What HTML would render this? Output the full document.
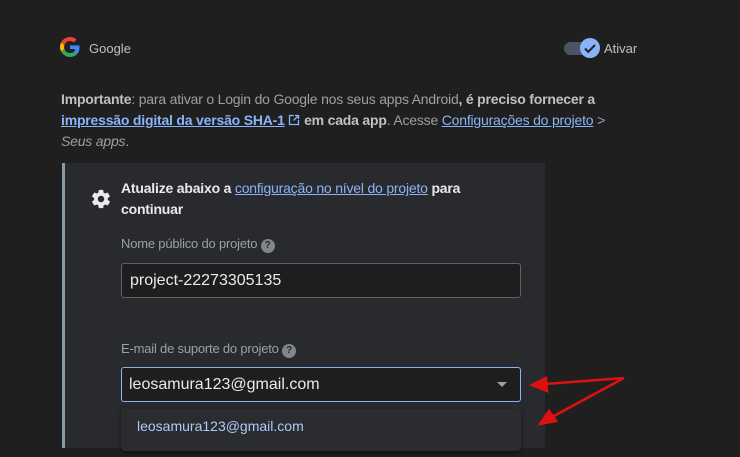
<!DOCTYPE html>
<html><head><meta charset="utf-8"><style>
*{box-sizing:border-box;margin:0;padding:0}
body{width:740px;height:457px;background:#1f1f1f;font-family:"Liberation Sans",Arial,sans-serif;color:#bdc1c6;position:relative;overflow:hidden;font-size:14px}
a{color:#8ab4f8;text-decoration:underline}
.abs{position:absolute}
b{color:#e8eaed}
</style></head><body>
<svg class="abs" style="left:60px;top:37px" width="20" height="20" viewBox="0 0 48 48">
<path fill="#EA4335" d="M24 9.5c3.5 0 6.7 1.2 9.2 3.6l6.9-6.9C35.9 2.4 30.4 0 24 0 14.6 0 6.6 5.4 2.7 13.3l8 6.2C12.6 13.6 17.8 9.5 24 9.5z"/>
<path fill="#4285F4" d="M46.9 24.5c0-1.6-.1-3.1-.4-4.5H24v9h12.9c-.6 3-2.3 5.5-4.8 7.2l7.7 6c4.5-4.2 7.1-10.3 7.1-17.7z"/>
<path fill="#FBBC05" d="M10.7 28.6c-.5-1.4-.8-3-.8-4.6s.3-3.2.8-4.6l-8-6.2C1 16.6 0 20.2 0 24s1 7.4 2.7 10.7l8-6.1z"/>
<path fill="#34A853" d="M24 48c6.5 0 11.9-2.1 15.9-5.8l-7.7-6c-2.2 1.5-5 2.3-8.2 2.3-6.2 0-11.4-4.1-13.3-9.8l-8 6.1C6.6 42.6 14.6 48 24 48z"/>
</svg>
<div class="abs" style="left:89px;top:41px;font-size:13px;color:#bdc1c6">Google</div>
<div class="abs" style="left:564px;top:42px;width:30px;height:13px;border-radius:7px;background:#4a5464"></div>
<div class="abs" style="left:580px;top:38px;width:20px;height:20px;border-radius:50%;background:#8ab4f8"></div>
<svg class="abs" style="left:580px;top:38px" width="20" height="20" viewBox="0 0 20 20"><path d="M5 10.5l3.3 3.3L15 7" stroke="#202124" stroke-width="2" fill="none"/></svg>
<div class="abs" style="left:604px;top:41px;font-size:13px;color:#bdc1c6">Ativar</div>
<div class="abs" style="left:61px;top:89px;width:600px;line-height:21px;font-size:14px;color:#9aa0a6;letter-spacing:-0.2px">
<b style="color:#bdc1c6">Importante</b>: para ativar o Login do Google nos seus apps Android<b style="color:#bdc1c6">, é preciso fornecer a<br><a href="#" style="font-weight:bold">impressão digital da versão SHA-1</a> <svg width="12" height="12" viewBox="0 0 12 12" style="vertical-align:-1px"><path d="M6 1.5H1.5v9h9V6M7 1.5h3.5V5M10.5 1.5L5.5 6.5" stroke="#8ab4f8" stroke-width="1.3" fill="none"/></svg> em cada app</b>. Acesse <a href="#">Configurações do projeto</a> &gt;<br><i>Seus apps</i>.
</div>
<div class="abs" style="left:62px;top:163px;width:483px;height:285px;background:#292a2d;border-left:3px solid #8a9ba8"></div>
<svg class="abs" style="left:90px;top:188px" width="22" height="22" viewBox="0 0 24 24"><path fill="#e8eaed" d="M19.4 13c.04-.3.06-.65.06-1s-.02-.7-.07-1l2.1-1.650c.2-.15.24-.42.12-.64l-2-3.46c-.12-.22-.39-.3-.6-.22l-2.5 1c-.52-.4-1.08-.73-1.690-.98l-.38-2.650A.49.49 0 0 0 14 2h-4c-.25 0-.46.18-.49.42l-.38 2.65c-.61.25-1.170.59-1.690.98l-2.49-1c-.23-.09-.49 0-.61.22l-2 3.46c-.13.22-.07.49.12.64L4.57 11c-.04.32-.07.66-.07 1s.02.68.07 1l-2.1 1.65c-.2.15-.25.42-.13.64l2 3.46c.12.22.39.3.61.22l2.49-1c.52.4 1.08.73 1.69.98l.38 2.65c.03.24.24.42.49.42h4c.25 0 .46-.18.49-.42l.38-2.65c.61-.25 1.17-.59 1.69-.98l2.49 1c.23.09.49 0 .61-.22l2-3.46c.12-.22.07-.49-.12-.64L19.4 13zM12 15.5A3.5 3.5 0 1 1 12 8.5a3.5 3.5 0 0 1 0 7z"/></svg>
<div class="abs" style="left:121px;top:178px;width:400px;line-height:21px;font-size:14px;color:#e8eaed;font-weight:bold;letter-spacing:-0.2px">Atualize abaixo a <a href="#" style="font-weight:normal">configuração no nível do projeto</a> para<br>continuar</div>
<div class="abs" style="left:121px;top:236px;font-size:13px;color:#9aa0a6;letter-spacing:-0.2px">Nome público do projeto <span style="display:inline-block;width:14px;height:14px;border-radius:50%;background:#80868b;color:#292a2d;font-size:10px;text-align:center;line-height:14px;font-weight:bold;letter-spacing:0">?</span></div>
<div class="abs" style="left:121px;top:263px;width:400px;height:35px;background:#1e1e1e;border:1px solid #5f6368;border-radius:3px;padding:8px 8px;font-size:16px;color:#e8eaed">project-22273305135</div>
<div class="abs" style="left:121px;top:341px;font-size:13px;color:#9aa0a6;letter-spacing:-0.2px">E-mail de suporte do projeto <span style="display:inline-block;width:14px;height:14px;border-radius:50%;background:#80868b;color:#292a2d;font-size:10px;text-align:center;line-height:14px;font-weight:bold;letter-spacing:0">?</span></div>
<div class="abs" style="left:121px;top:367px;width:400px;height:35px;background:#1e1e1e;border:1px solid #8ab4f8;border-radius:3px;padding:8px 7px;font-size:16px;color:#e8eaed">leosamura123@gmail.com</div>
<div class="abs" style="left:497px;top:382px;width:0;height:0;border-left:5px solid transparent;border-right:5px solid transparent;border-top:5px solid #9aa0a6"></div>
<div class="abs" style="left:121px;top:409px;width:400px;height:42px;background:#2b2c30;border-radius:0 0 4px 4px;box-shadow:0 2px 4px rgba(0,0,0,.5);padding:9px 16px;font-size:14px;color:#aecbfa">leosamura123@gmail.com</div>
<svg class="abs" style="left:0;top:0" width="740" height="457"><g stroke="#e01010" stroke-width="2.5" fill="#e01010">
<line x1="624" y1="378" x2="545" y2="384"/><polygon points="532,385 546,378 547,391"/>
<line x1="624" y1="378" x2="552" y2="417"/><polygon points="540,424 549,411 556,421"/></g></svg>
</body></html>
